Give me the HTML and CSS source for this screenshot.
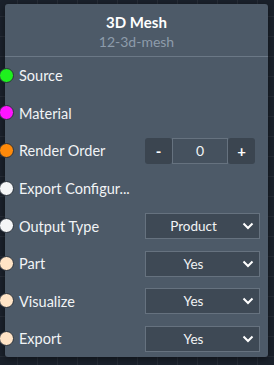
FILE: index.html
```html
<!DOCTYPE html>
<html lang="en">
<head>
  <meta charset="UTF-8">
  <title>3D Mesh</title>
  <link rel="stylesheet" href="styles.css">
</head>
<body>
  <div class="node">
    <div class="node-head">
      <div class="title">3D Mesh</div>
      <div class="subtitle">12-3d-mesh</div>
    </div>
    <div class="row"><span class="dot green"></span><span class="label">Source</span></div>
    <div class="row"><span class="dot magenta"></span><span class="label">Material</span></div>
    <div class="row">
      <span class="dot orange"></span><span class="label">Render Order</span>
      <div class="stepper">
        <button class="step">-</button>
        <div class="value">0</div>
        <button class="step">+</button>
      </div>
    </div>
    <div class="row"><span class="dot white"></span><span class="label">Export Configur...</span></div>
    <div class="row">
      <span class="dot white"></span><span class="label">Output Type</span>
      <div class="select">Product<svg viewBox="0 0 12 8"><path d="M1.5 1.5 6 6l4.5-4.5"/></svg></div>
    </div>
    <div class="row">
      <span class="dot peach"></span><span class="label">Part</span>
      <div class="select">Yes<svg viewBox="0 0 12 8"><path d="M1.5 1.5 6 6l4.5-4.5"/></svg></div>
    </div>
    <div class="row">
      <span class="dot peach"></span><span class="label">Visualize</span>
      <div class="select">Yes<svg viewBox="0 0 12 8"><path d="M1.5 1.5 6 6l4.5-4.5"/></svg></div>
    </div>
    <div class="row">
      <span class="dot peach"></span><span class="label">Export</span>
      <div class="select">Yes<svg viewBox="0 0 12 8"><path d="M1.5 1.5 6 6l4.5-4.5"/></svg></div>
    </div>
  </div>
</body>
</html>
```

FILE: styles.css
```css
body {
  margin: 0;
  height: 365px;
  overflow: hidden;
  background-color: #1a212b;
  background-image:
    linear-gradient(rgba(255,255,255,.05) 1px, transparent 1px),
    linear-gradient(90deg, rgba(255,255,255,.05) 1px, transparent 1px);
  background-size: 20px 20px;
  background-position: -3px -4px;
  font-family: Lato, "Open Sans", sans-serif;
  color: #f2f4f6;
}
.node {
  position: relative;
  margin: 4px 0 0 5px;
  width: 263px;
  height: 353px;
  background: #4d5a68;
  border-radius: 3px;
  box-shadow: 0 2px 6px rgba(0,0,0,.45);
}
.node-head {
  height: 52px;
  border-bottom: 1px solid #6b7886;
  display: flex;
  flex-direction: column;
  align-items: center;
}
.title {
  margin-top: 9px;
  font-size: 15px;
  font-weight: 700;
  color: #fff;
  line-height: 18px;
}
.subtitle {
  margin-top: 2px;
  font-size: 14px;
  color: #8d9cab;
  line-height: 18px;
}
.row {
  position: relative;
  height: 37.6px;
  display: flex;
  align-items: center;
  padding: 0 8px 0 14px;
}
.label {
  flex: 1;
  font-size: 14.5px;
  white-space: nowrap;
}
.dot {
  position: absolute;
  left: -6px;
  top: 50%;
  width: 13px;
  height: 13px;
  margin-top: -8px;
  border-radius: 50%;
  border: 1px solid #2a323c;
}
.green { background: #1ef01e; }
.magenta { background: #ff14ff; }
.orange { background: #ff8a0a; }
.white { background: #f5f6f7; }
.peach { background: #ffe4c6; }

.stepper {
  display: flex;
  width: 110px;
  height: 26px;
  margin-right: 5px;
}
.step {
  width: 27px;
  border: 0;
  border-radius: 3px;
  background: #3b4550;
  color: #fff;
  font-family: inherit;
  font-size: 15px;
  font-weight: 700;
  padding: 0;
}
.value {
  flex: 1;
  border: 1px solid #66727f;
  background: #45515e;
  display: flex;
  align-items: center;
  justify-content: center;
  font-size: 14px;
}
.select {
  position: relative;
  box-sizing: border-box;
  width: 115px;
  height: 26px;
  border: 1px solid #66727f;
  background: #3e4955;
  display: flex;
  align-items: center;
  justify-content: center;
  padding-right: 18px;
  font-size: 13.5px;
}
.select svg {
  position: absolute;
  right: 5px;
  top: 8px;
  width: 12px;
  height: 8px;
  fill: none;
  stroke: #fff;
  stroke-width: 2;
}
```
